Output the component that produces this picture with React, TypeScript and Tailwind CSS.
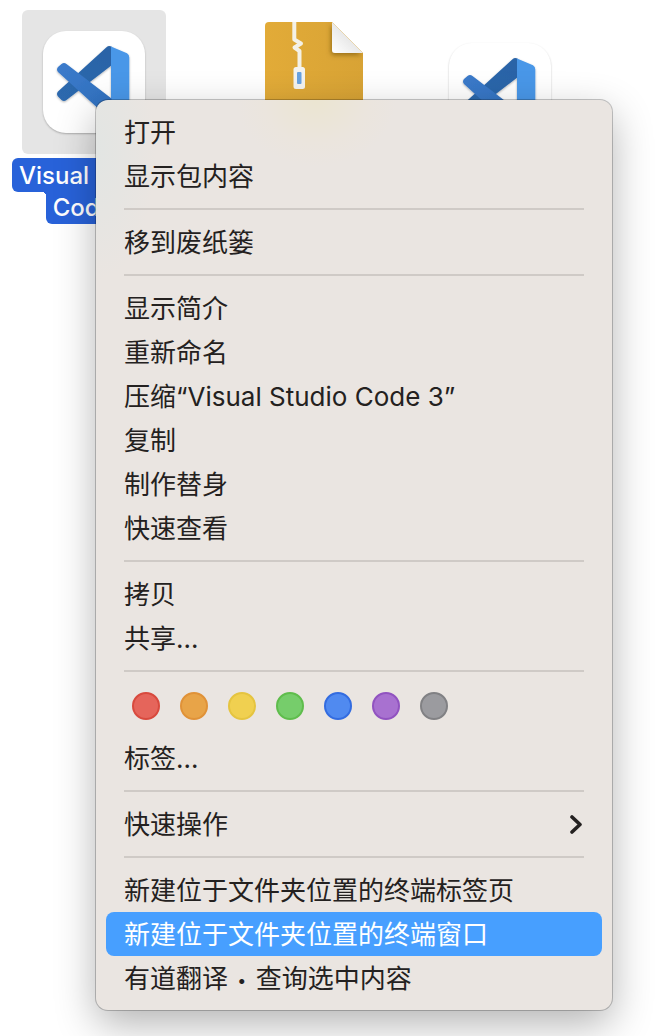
import React from "react";

const FONT = "font-['Inter','Noto_Sans_CJK_SC',sans-serif]";

function CodeIcon() {
  return (
    <svg viewBox="0 0 102 102" className="block size-[102px] rounded-[23px] bg-white shadow-[0_1px_2px_rgba(0,0,0,0.25)]" aria-hidden="true">
      <defs>
        <linearGradient id="armBack" x1="1" y1="0" x2="0" y2="1">
          <stop offset="0" stopColor="#2a63a6" />
          <stop offset="1" stopColor="#2d69ae" />
        </linearGradient>
        <linearGradient id="armFront" x1="0" y1="0" x2="1" y2="1">
          <stop offset="0" stopColor="#3c7bcb" />
          <stop offset="1" stopColor="#2f6fbd" />
        </linearGradient>
        <filter id="armShadow" x="-20%" y="-20%" width="140%" height="140%">
          <feDropShadow dx="0" dy="1" stdDeviation="1" floodColor="#000" floodOpacity="0.3" />
        </filter>
      </defs>
      <g filter="url(#armShadow)">
        <path d="M63.500 16.300Q66 14 69 16V34L23.500 69Q21 71 18.500 69L15 65.500Q13 63 15 60.500Z" fill="url(#armBack)" />
        <path d="M68 15.500L84 22.300Q86.300 23.500 86.300 26.500V76Q86.300 79 84 80L68 87Z" fill="#4a97e8" />
        <path d="M23.500 33L68.500 67.500V86Q66 87.500 63.500 85L15 41Q13 38.500 15 36L18.500 33Q21 31 23.500 33Z" fill="url(#armFront)" />
      </g>
    </svg>
  );
}

function ArchiveIcon() {
  return (
    <svg viewBox="0 0 98 126" className="block h-[126px] w-[98px]" aria-hidden="true">
      <defs>
        <linearGradient id="fold" x1="0" y1="1" x2="0.600" y2="0.400">
          <stop offset="0" stopColor="#ffffff" />
          <stop offset="1" stopColor="#e4e4e4" />
        </linearGradient>
        <linearGradient id="paper" x1="0" y1="0" x2="1" y2="0">
          <stop offset="0" stopColor="#e2ab38" />
          <stop offset="1" stopColor="#d8a335" />
        </linearGradient>
        <filter id="foldShadow" x="-40%" y="-40%" width="180%" height="180%">
          <feDropShadow dx="-1" dy="2" stdDeviation="2.500" floodColor="#6b4700" floodOpacity="0.600" />
        </filter>
        <clipPath id="sheet">
          <path d="M4 0H67L98 31V122Q98 126 94 126H4Q0 126 0 122V4Q0 0 4 0Z" />
        </clipPath>
      </defs>
      <g clipPath="url(#sheet)">
        <rect width="98" height="126" fill="url(#paper)" />
        <path d="M67 0V28Q67 31 70 31H98Z" fill="url(#fold)" filter="url(#foldShadow)" />
        <path d="M29.300 0V17.500L36 21.500L29.500 25.500L34.500 29V46" fill="none" stroke="#f4f1e6" strokeWidth="4" strokeLinejoin="round" />
        <rect x="28.500" y="45" width="11.500" height="22" rx="2.500" fill="#f4f3ee" />
        <rect x="32" y="50" width="4.500" height="12" rx="1" fill="#68a2df" />
      </g>
    </svg>
  );
}

function Desktop() {
  return (
    <div className="absolute inset-x-0 top-0 h-60 overflow-hidden">
      <figure className="absolute left-3 top-[10px] flex w-[164px] flex-col items-center gap-1">
        <div className="flex size-36 items-center justify-center rounded-md bg-[#e5e5e5]">
          <CodeIcon />
        </div>
        <figcaption className="flex flex-col items-center text-2xl font-medium leading-8 text-white">
          <span className="w-[164px] whitespace-nowrap rounded-md bg-[#2862d9] px-[7px] pt-0.5">Visual Studio</span>
          <span className="relative rounded-b-md bg-[#2862d9] px-[7px] before:absolute before:right-full before:top-0 before:size-1 before:bg-[radial-gradient(circle_at_bottom_left,transparent_4px,#2862d9_4px)]">
            Code 3
          </span>
        </figcaption>
      </figure>
      <div className="absolute left-[265px] top-[22px]">
        <ArchiveIcon />
      </div>
      <div className="absolute left-[449px] top-[43px]">
        <CodeIcon />
      </div>
    </div>
  );
}

function Item({ label, active = false, submenu = false }: { label: React.ReactNode; active?: boolean; submenu?: boolean }) {
  return (
    <button
      type="button"
      role="menuitem"
      aria-haspopup={submenu ? "menu" : undefined}
      className={
        active
          ? "flex h-11 w-full items-center justify-between rounded-lg bg-[#479fff] px-[18px] pt-0.5 text-left text-white"
          : "flex h-11 w-full items-center justify-between rounded-lg px-[18px] pt-0.5 text-left"
      }
    >
      <span className="whitespace-nowrap">{label}</span>
      {submenu && (
        <svg viewBox="0 0 14 20" className="h-5 w-[14px]" fill="none" stroke="currentColor" strokeWidth="3.600" strokeLinecap="round" strokeLinejoin="round" aria-hidden="true">
          <path d="M2 2L10 9.500L2 17" />
        </svg>
      )}
    </button>
  );
}

function Separator() {
  return <hr className="mx-[18px] my-[10px] border-0 border-t-2 border-[#cfcac6]" />;
}

const TAGS = [
  { name: "红色", style: "border-[#d84a3e] bg-[#e5655b]" },
  { name: "橙色", style: "border-[#e09238] bg-[#e8a448]" },
  { name: "黄色", style: "border-[#e5c440] bg-[#f0d050]" },
  { name: "绿色", style: "border-[#5fbd4c] bg-[#76cd6b]" },
  { name: "蓝色", style: "border-[#336ce0] bg-[#508af0]" },
  { name: "紫色", style: "border-[#9153c0] bg-[#a871d0]" },
  { name: "灰色", style: "border-[#818184] bg-[#9b9b9f]" },
];

export default function App() {
  return (
    <main className={`relative min-h-screen overflow-hidden bg-white pb-[26px] pl-24 pr-[46px] pt-[100px] ${FONT}`} lang="zh-CN">
      <Desktop />
      <div
        role="menu"
        className="relative rounded-xl bg-[#eae5e1] bg-[radial-gradient(ellipse_80px_66px_at_220px_0px,#ebe5d1_0%,#ece5da80_65%,#eae5e100_100%),radial-gradient(ellipse_60px_130px_at_0px_50px,#e2e5e3_0%,#e2e5e300_100%)] p-[10px] text-[26px] leading-[40px] text-[#242120] shadow-[0_0_0_1px_rgba(0,0,0,0.22),0_14px_40px_rgba(0,0,0,0.3)]"
      >
        <Item label="打开" />
        <Item label="显示包内容" />
        <Separator />
        <Item label="移到废纸篓" />
        <Separator />
        <Item label="显示简介" />
        <Item label="重新命名" />
        <Item label="压缩“Visual Studio Code 3”" />
        <Item label="复制" />
        <Item label="制作替身" />
        <Item label="快速查看" />
        <Separator />
        <Item label="拷贝" />
        <Item label="共享…" />
        <Separator />
        <div role="group" className="flex gap-5 px-[26px] pb-4 pt-[10px]">
          {TAGS.map((tag) => (
            <button key={tag.name} type="button" aria-label={tag.name} className={`size-7 rounded-full border-2 ${tag.style}`} />
          ))}
        </div>
        <Item label="标签…" />
        <Separator />
        <Item label="快速操作" submenu />
        <Separator />
        <Item label="新建位于文件夹位置的终端标签页" />
        <Item label="新建位于文件夹位置的终端窗口" active />
        <Item
          label={
            <>
              有道翻译 <span className="px-0.5 align-[2px] text-base leading-none">•</span> 查询选中内容
            </>
          }
        />
      </div>
    </main>
  );
}
